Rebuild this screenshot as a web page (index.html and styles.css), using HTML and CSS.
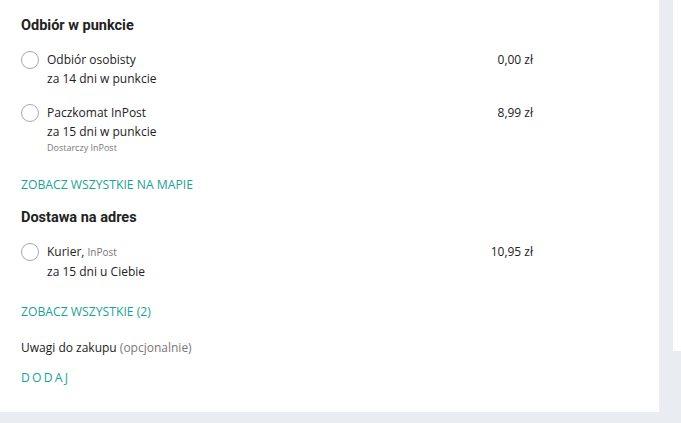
FILE: index.html
```
<!DOCTYPE html>
<html lang="pl">
<head>
    <meta charset="UTF-8">
    <meta name="viewport" content="width=device-width, initial-scale=1.0">
    <title>Dostawa</title>
    <link rel="stylesheet" href="styles.css">
</head>
<body>
    <div class="page">
        <div class="panel">
            <h2 class="section-title">Odbiór w punkcie</h2>

            <div class="options">
                <div class="option">
                    <span class="radio"></span>
                    <div class="option-info">
                        <div class="option-name">Odbiór osobisty</div>
                        <div class="option-time">za 14 dni w punkcie</div>
                    </div>
                    <div class="option-price">0,00 zł</div>
                </div>

                <div class="option">
                    <span class="radio"></span>
                    <div class="option-info">
                        <div class="option-name">Paczkomat InPost</div>
                        <div class="option-time">za 15 dni w punkcie</div>
                        <div class="option-carrier">Dostarczy InPost</div>
                    </div>
                    <div class="option-price">8,99 zł</div>
                </div>
            </div>

            <a class="link" href="#">Zobacz wszystkie na mapie</a>

            <h2 class="section-title">Dostawa na adres</h2>

            <div class="options">
                <div class="option">
                    <span class="radio"></span>
                    <div class="option-info">
                        <div class="option-name">Kurier, <span class="muted">InPost</span></div>
                        <div class="option-time">za 15 dni u Ciebie</div>
                    </div>
                    <div class="option-price">10,95 zł</div>
                </div>
            </div>

            <a class="link" href="#">Zobacz wszystkie (2)</a>

            <div class="notes">Uwagi do zakupu <span class="optional">(opcjonalnie)</span></div>
            <a class="link add" href="#">Dodaj</a>
        </div>
        <div class="gutter"></div>
        <div class="side"></div>
    </div>
</body>
</html>
```
FILE: styles.css
```
/* Global styles */
body {
    margin: 0;
    background-color: #e9edf1;
    font-family: 'Open Sans', 'Liberation Sans', sans-serif;
    color: #222;
}

.page {
    display: flex;
    height: 423px;
}

/* Main white panel */
.panel {
    background-color: #fff;
    width: 659px;
    height: 412px;
    box-sizing: border-box;
    padding: 16px 21px 0;
}

.gutter {
    width: 14px;
}

.side {
    flex: 1;
    background-color: #fff;
    height: 351px;
}

/* Section headings */
.section-title {
    font-family: Roboto, 'Liberation Sans', sans-serif;
    font-weight: 700;
    font-size: 14.5px;
    line-height: 20px;
    margin: 0 0 14px;
    color: #222;
}

/* Delivery options */
.options {
    display: flex;
    flex-direction: column;
    gap: 15px;
    margin-bottom: 23px;
}

.option {
    display: flex;
    align-items: flex-start;
    font-size: 12px;
    line-height: 19px;
}

.radio {
    width: 16px;
    height: 16px;
    border: 1px solid #a9a9a9;
    border-radius: 50%;
    margin-top: 1px;
    margin-right: 8px;
    flex-shrink: 0;
}

.option-info {
    width: 400px;
}

.option-price {
    width: 86px;
    text-align: right;
}

.option-carrier {
    font-size: 9px;
    line-height: 13px;
    color: #777;
}

.muted {
    font-size: 10px;
    color: #777;
}

/* Teal links */
.link {
    display: block;
    color: #19a394;
    text-decoration: none;
    text-transform: uppercase;
    font-size: 12.2px;
    line-height: 16px;
    margin-bottom: 15px;
}

.notes {
    font-size: 12px;
    line-height: 16px;
    margin-top: 20px;
    margin-bottom: 14px;
}

.optional {
    color: #777;
}

.add {
    letter-spacing: 2.2px;
}
```
